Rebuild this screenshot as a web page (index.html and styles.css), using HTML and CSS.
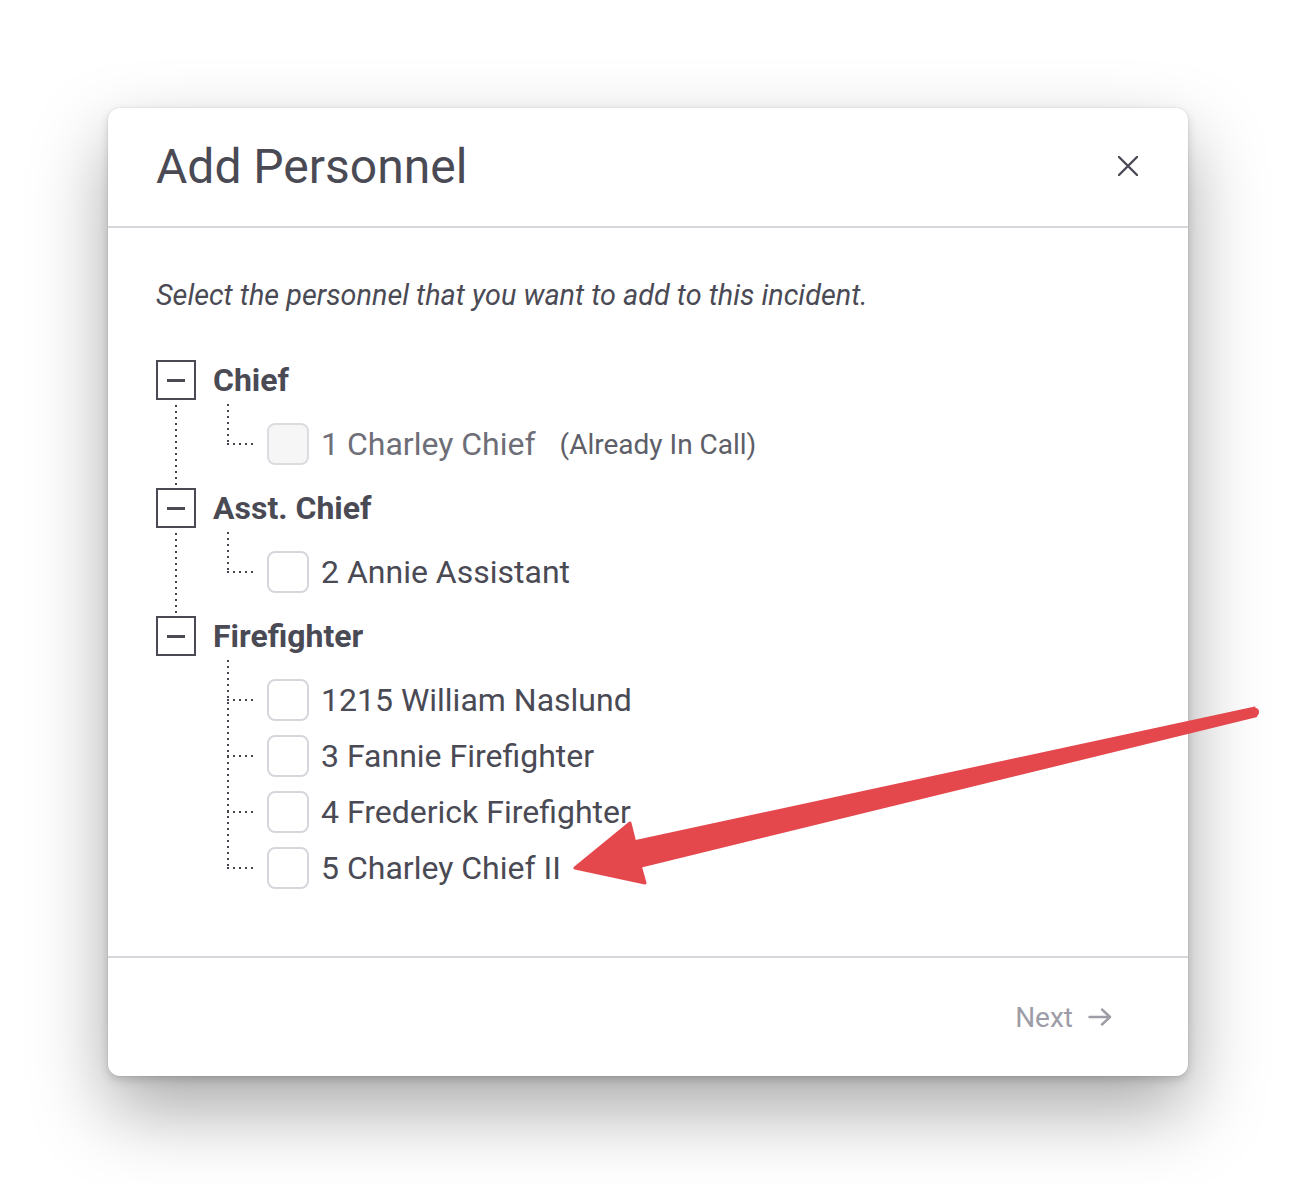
FILE: index.html
```html
<!DOCTYPE html>
<html lang="en">
<head>
    <meta charset="UTF-8">
    <meta name="viewport" content="width=device-width, initial-scale=1.0">
    <title>Add Personnel</title>
    <link rel="stylesheet" href="styles.css">
</head>
<body>
<div class="modal">
    <div class="modal-header">
        <h2>Add Personnel</h2>
        <button class="close-btn" aria-label="Close">
            <svg width="20" height="20" viewBox="0 0 20 20"><path d="M1 1 L19 19 M19 1 L1 19" stroke="#4a4a55" stroke-width="2.4" stroke-linecap="round"/></svg>
        </button>
    </div>

    <div class="modal-body">
        <p class="hint">Select the personnel that you want to add to this incident.</p>

        <!-- Personnel tree -->
        <ul class="tree">
            <li class="group">
                <div class="group-head"><span class="toggle"></span><span class="group-name">Chief</span></div>
                <ul class="members">
                    <li class="member disabled"><span class="check"></span><span class="name">1 Charley Chief</span><span class="note">(Already In Call)</span></li>
                </ul>
            </li>
            <li class="group">
                <div class="group-head"><span class="toggle"></span><span class="group-name">Asst. Chief</span></div>
                <ul class="members">
                    <li class="member"><span class="check"></span><span class="name">2 Annie Assistant</span></li>
                </ul>
            </li>
            <li class="group">
                <div class="group-head"><span class="toggle"></span><span class="group-name">Firefighter</span></div>
                <ul class="members">
                    <li class="member"><span class="check"></span><span class="name">1215 William Naslund</span></li>
                    <li class="member"><span class="check"></span><span class="name">3 Fannie Firefighter</span></li>
                    <li class="member"><span class="check"></span><span class="name">4 Frederick Firefighter</span></li>
                    <li class="member"><span class="check"></span><span class="name">5 Charley Chief II</span></li>
                </ul>
            </li>
        </ul>
        <!-- End tree -->
    </div>

    <div class="modal-footer">
        <button class="next-btn">Next
            <svg width="24" height="18" viewBox="0 0 24 18"><path d="M1.5 9 H22 M14 1.5 L22 9 L14 16.5" fill="none" stroke="#9d9da7" stroke-width="2.4" stroke-linecap="round" stroke-linejoin="round"/></svg>
        </button>
    </div>
</div>

<svg class="annotation" width="1296" height="1184" viewBox="0 0 1296 1184">
    <polygon points="1254.1,708.1 634.7,841.8 630,823 575,868 645,883 640.3,866.2 1255.9,715.9" fill="#e4484d" stroke="#e4484d" stroke-width="3" stroke-linejoin="round"/>
    <circle cx="1255" cy="712" r="4" fill="#e4484d"/>
</svg>
</body>
</html>
```

FILE: styles.css
```css
body {
    margin: 0;
    padding: 108px 0 0;
    min-height: 1184px;
    box-sizing: border-box;
    background: #fff;
    font-family: Roboto, "Liberation Sans", sans-serif;
    color: #4a4a55;
    position: relative;
    overflow: hidden;
}

.modal {
    width: 1080px;
    margin: 0 auto;
    background: #fff;
    border-radius: 12px;
    box-shadow: 0 0 0 1px rgba(0, 0, 0, 0.04),
                0 4px 10px rgba(0, 0, 0, 0.16),
                0 34px 76px rgba(0, 0, 0, 0.34);
}

.modal-header {
    height: 120px;
    padding: 0 50px 2px 48px;
    box-sizing: border-box;
    display: flex;
    align-items: center;
    justify-content: space-between;
    border-bottom: 2px solid #d6d6db;
}

.modal-header h2 {
    margin: 0;
    font-size: 48px;
    font-weight: 400;
    color: #4a4a55;
}

.close-btn {
    border: none;
    background: none;
    padding: 0;
    width: 20px;
    height: 20px;
    display: flex;
    cursor: pointer;
}

.modal-body {
    padding: 51px 48px 60px;
}

.hint {
    margin: 0;
    font-size: 28.8px;
    line-height: 33px;
    font-style: italic;
    color: #4a4a55;
}

.tree {
    list-style: none;
    margin: 48px 0 0;
    padding: 0;
}

.group {
    padding-bottom: 16px;
}

.group:not(:last-child) {
    background: repeating-linear-gradient(to bottom, #44444f 0 2px, transparent 2px 6px) no-repeat 19px 45px / 2px calc(100% - 48px);
}

.group:last-child {
    padding-bottom: 0;
}

.group-head {
    display: flex;
    align-items: center;
    height: 40px;
}

.toggle {
    width: 40px;
    height: 40px;
    box-sizing: border-box;
    border: 2px solid #4a4a55;
    display: flex;
    align-items: center;
    justify-content: center;
}

.toggle::before {
    content: "";
    width: 18px;
    height: 3px;
    background: #4a4a55;
}

.group-name {
    margin-left: 17px;
    font-size: 32px;
    font-weight: 700;
    color: #4a4a55;
}

.members {
    list-style: none;
    margin: 0 0 0 71px;
    padding: 16px 0 0;
    background: repeating-linear-gradient(to bottom, #44444f 0 2px, transparent 2px 6px) no-repeat 0 4px / 2px calc(100% - 32px);
}

.member {
    display: flex;
    align-items: center;
    height: 56px;
    font-size: 32px;
}

.member::before {
    content: "";
    width: 30px;
    height: 2px;
    margin-right: 10px;
    background: repeating-linear-gradient(to right, #44444f 0 2px, transparent 2px 6px);
}

.check {
    width: 42px;
    height: 42px;
    box-sizing: border-box;
    border: 2px solid #d6d6dc;
    border-radius: 8px;
    background: #fff;
    margin-right: 12px;
}

.member.disabled .check {
    background: #f6f6f7;
    border-color: #dcdce0;
}

.member.disabled .name {
    color: #6e6e78;
}

.note {
    margin-left: 24px;
    font-size: 28px;
    color: #5e5e68;
}

.modal-footer {
    height: 120px;
    box-sizing: border-box;
    border-top: 2px solid #d6d6db;
    display: flex;
    align-items: center;
    justify-content: flex-end;
    padding: 0 76px 0 48px;
}

.next-btn {
    border: none;
    background: none;
    padding: 0;
    font-family: inherit;
    font-size: 28px;
    color: #9d9da7;
    display: flex;
    align-items: center;
    gap: 15px;
    cursor: pointer;
}

.annotation {
    position: absolute;
    top: 0;
    left: 0;
    pointer-events: none;
}
```
